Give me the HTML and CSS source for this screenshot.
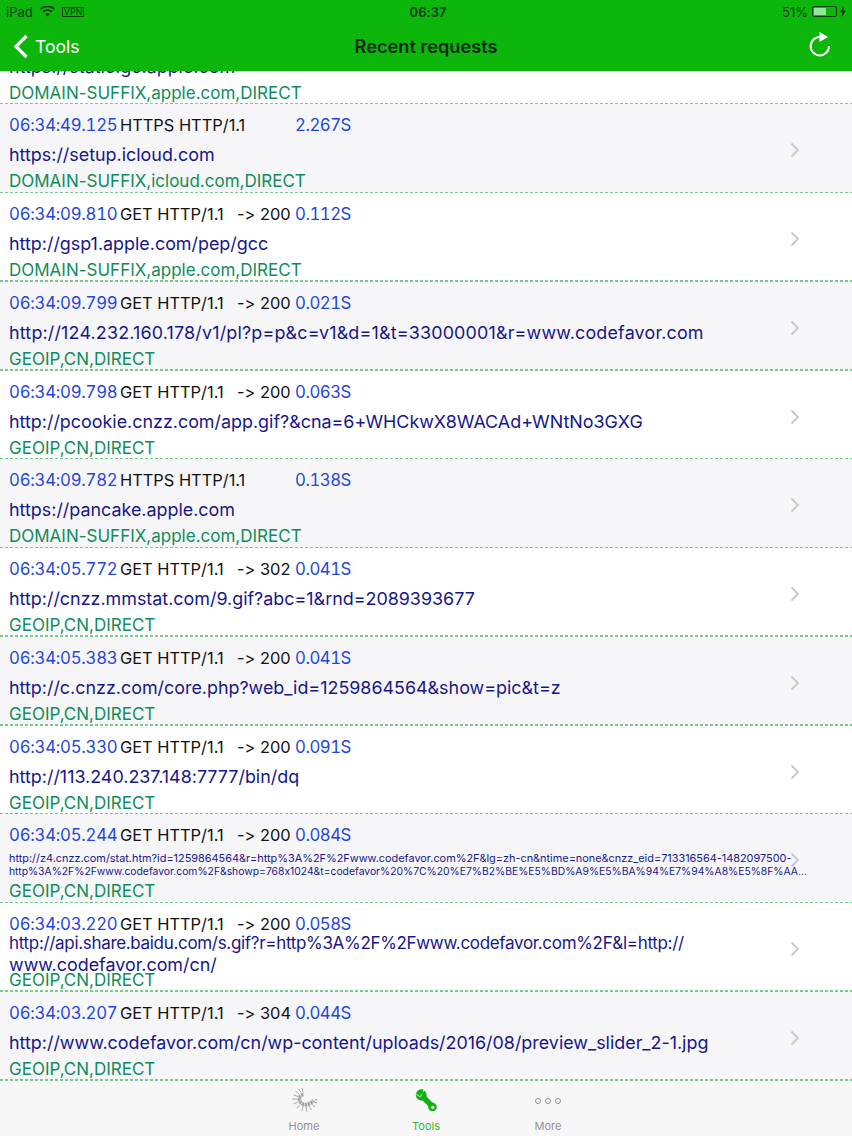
FILE: index.html
```html
<!DOCTYPE html>
<html lang="en">
<head>
<meta charset="utf-8">
<title>Recent requests</title>
<link rel="stylesheet" href="styles.css">
</head>
<body>
<div class="app">
  <header class="top">
    <div class="status">
      <div class="status-side">
        <span>iPad</span>
        <svg class="wifi" width="15" height="11" viewBox="0 0 15 11"><path d="M7.500 10.600 5.300 8.100a3.200 3.200 0 0 1 4.400 0zM3.800 6.500 2.600 5.100a7.400 7.400 0 0 1 9.800 0l-1.200 1.400a5.600 5.600 0 0 0-7.400 0zM1.300 3.700 0 2.300a11.200 11.200 0 0 1 15 0l-1.300 1.400a9.300 9.300 0 0 0-12.400 0z" fill="#0a3d0a"/></svg>
        <span class="vpn">VPN</span>
      </div>
      <div class="clock">06:37</div>
      <div class="status-side status-right">
        <span>51%</span>
        <span class="battery"><span class="battery-fill"></span></span>
        <svg width="6" height="11" viewBox="0 0 6 11"><path d="M3.600 0 0 6.200h2.400L1.800 11 6 4.400H3.400z" fill="#0a3d0a"/></svg>
      </div>
    </div>
    <nav class="nav">
      <div class="back">
        <svg width="16" height="25" viewBox="0 0 16 25"><path d="M13.500 2 3 12.500 13.500 23" fill="none" stroke="#fff" stroke-width="3.200"/></svg>
        <span>Tools</span>
      </div>
      <h1 class="title">Recent requests</h1>
      <svg class="refresh" width="24" height="26" viewBox="0 0 24 26"><path d="M13.500 5.200A9.200 9.200 0 1 0 21 14" fill="none" stroke="#fff" stroke-width="2"/><path d="M11.500 0 20 5 11.500 10z" fill="#fff"/></svg>
    </nav>
  </header>

  <main class="list">
    <article class="row row-first">
      <div class="meta"><span class="time"></span></div>
      <div class="url"><span>https://static.gc.apple.com</span></div>
      <div class="rule">DOMAIN-SUFFIX,apple.com,DIRECT</div>
    </article>
    <article class="row row-alt">
      <div class="meta"><span class="time">06:34:49.125</span><span class="method">HTTPS HTTP/1.1</span><span class="code"></span><span class="dur">2.267S</span></div>
      <div class="url"><span>https://setup.icloud.com</span></div>
      <div class="rule">DOMAIN-SUFFIX,icloud.com,DIRECT</div>
      <svg class="chev" width="10" height="16" viewBox="0 0 10 16"><path d="M1.500 1.500 8 8l-6.500 6.500" fill="none" stroke="#c7c7cc" stroke-width="1.800"/></svg>
    </article>
    <article class="row">
      <div class="meta"><span class="time">06:34:09.810</span><span class="method">GET HTTP/1.1</span><span class="code">-&gt; 200</span><span class="dur">0.112S</span></div>
      <div class="url"><span>http://gsp1.apple.com/pep/gcc</span></div>
      <div class="rule">DOMAIN-SUFFIX,apple.com,DIRECT</div>
      <svg class="chev" width="10" height="16" viewBox="0 0 10 16"><path d="M1.500 1.500 8 8l-6.500 6.500" fill="none" stroke="#c7c7cc" stroke-width="1.800"/></svg>
    </article>
    <article class="row row-alt">
      <div class="meta"><span class="time">06:34:09.799</span><span class="method">GET HTTP/1.1</span><span class="code">-&gt; 200</span><span class="dur">0.021S</span></div>
      <div class="url"><span class="url-loose">http://124.232.160.178/v1/pl?p=p&amp;c=v1&amp;d=1&amp;t=33000001&amp;r=www.codefavor.com</span></div>
      <div class="rule">GEOIP,CN,DIRECT</div>
      <svg class="chev" width="10" height="16" viewBox="0 0 10 16"><path d="M1.500 1.500 8 8l-6.500 6.500" fill="none" stroke="#c7c7cc" stroke-width="1.800"/></svg>
    </article>
    <article class="row">
      <div class="meta"><span class="time">06:34:09.798</span><span class="method">GET HTTP/1.1</span><span class="code">-&gt; 200</span><span class="dur">0.063S</span></div>
      <div class="url"><span>http://pcookie.cnzz.com/app.gif?&amp;cna=6+WHCkwX8WACAd+WNtNo3GXG</span></div>
      <div class="rule">GEOIP,CN,DIRECT</div>
      <svg class="chev" width="10" height="16" viewBox="0 0 10 16"><path d="M1.500 1.500 8 8l-6.500 6.500" fill="none" stroke="#c7c7cc" stroke-width="1.800"/></svg>
    </article>
    <article class="row row-alt">
      <div class="meta"><span class="time">06:34:09.782</span><span class="method">HTTPS HTTP/1.1</span><span class="code"></span><span class="dur">0.138S</span></div>
      <div class="url"><span>https://pancake.apple.com</span></div>
      <div class="rule">DOMAIN-SUFFIX,apple.com,DIRECT</div>
      <svg class="chev" width="10" height="16" viewBox="0 0 10 16"><path d="M1.500 1.500 8 8l-6.500 6.500" fill="none" stroke="#c7c7cc" stroke-width="1.800"/></svg>
    </article>
    <article class="row">
      <div class="meta"><span class="time">06:34:05.772</span><span class="method">GET HTTP/1.1</span><span class="code">-&gt; 302</span><span class="dur">0.041S</span></div>
      <div class="url"><span>http://cnzz.mmstat.com/9.gif?abc=1&amp;rnd=2089393677</span></div>
      <div class="rule">GEOIP,CN,DIRECT</div>
      <svg class="chev" width="10" height="16" viewBox="0 0 10 16"><path d="M1.500 1.500 8 8l-6.500 6.500" fill="none" stroke="#c7c7cc" stroke-width="1.800"/></svg>
    </article>
    <article class="row row-alt">
      <div class="meta"><span class="time">06:34:05.383</span><span class="method">GET HTTP/1.1</span><span class="code">-&gt; 200</span><span class="dur">0.041S</span></div>
      <div class="url"><span>http://c.cnzz.com/core.php?web_id=1259864564&amp;show=pic&amp;t=z</span></div>
      <div class="rule">GEOIP,CN,DIRECT</div>
      <svg class="chev" width="10" height="16" viewBox="0 0 10 16"><path d="M1.500 1.500 8 8l-6.500 6.500" fill="none" stroke="#c7c7cc" stroke-width="1.800"/></svg>
    </article>
    <article class="row">
      <div class="meta"><span class="time">06:34:05.330</span><span class="method">GET HTTP/1.1</span><span class="code">-&gt; 200</span><span class="dur">0.091S</span></div>
      <div class="url"><span>http://113.240.237.148:7777/bin/dq</span></div>
      <div class="rule">GEOIP,CN,DIRECT</div>
      <svg class="chev" width="10" height="16" viewBox="0 0 10 16"><path d="M1.500 1.500 8 8l-6.500 6.500" fill="none" stroke="#c7c7cc" stroke-width="1.800"/></svg>
    </article>
    <article class="row row-alt">
      <div class="meta"><span class="time">06:34:05.244</span><span class="method">GET HTTP/1.1</span><span class="code">-&gt; 200</span><span class="dur">0.084S</span></div>
      <div class="url url-small"><div><div class="small-a">http://z4.cnzz.com/stat.htm?id=1259864564&amp;r=http%3A%2F%2Fwww.codefavor.com%2F&amp;lg=zh-cn&amp;ntime=none&amp;cnzz_eid=713316564-1482097500-</div><div class="small-b">http%3A%2F%2Fwww.codefavor.com%2F&amp;showp=768x1024&amp;t=codefavor%20%7C%20%E7%B2%BE%E5%BD%A9%E5%BA%94%E7%94%A8%E5%8F%AA...</div></div></div>
      <div class="rule">GEOIP,CN,DIRECT</div>
      <svg class="chev" width="10" height="16" viewBox="0 0 10 16"><path d="M1.500 1.500 8 8l-6.500 6.500" fill="none" stroke="#c7c7cc" stroke-width="1.800"/></svg>
    </article>
    <article class="row">
      <div class="meta"><span class="time">06:34:03.220</span><span class="method">GET HTTP/1.1</span><span class="code">-&gt; 200</span><span class="dur">0.058S</span></div>
      <div class="url"><div><div class="pct">http://api.share.baidu.com/s.gif?r=http%3A%2F%2Fwww.codefavor.com%2F&amp;l=http://</div><div>www.codefavor.com/cn/</div></div></div>
      <div class="rule">GEOIP,CN,DIRECT</div>
      <svg class="chev" width="10" height="16" viewBox="0 0 10 16"><path d="M1.500 1.500 8 8l-6.500 6.500" fill="none" stroke="#c7c7cc" stroke-width="1.800"/></svg>
    </article>
    <article class="row row-alt">
      <div class="meta"><span class="time">06:34:03.207</span><span class="method">GET HTTP/1.1</span><span class="code">-&gt; 304</span><span class="dur">0.044S</span></div>
      <div class="url"><span>http://www.codefavor.com/cn/wp-content/uploads/2016/08/preview_slider_2-1.jpg</span></div>
      <div class="rule">GEOIP,CN,DIRECT</div>
      <svg class="chev" width="10" height="16" viewBox="0 0 10 16"><path d="M1.500 1.500 8 8l-6.500 6.500" fill="none" stroke="#c7c7cc" stroke-width="1.800"/></svg>
    </article>
  </main>

  <footer class="tabs">
    <div class="tab">
      <svg width="28" height="26" viewBox="0 0 28 26"><path d="M13 4 12 0M11 4.500 8.500 1M9 6 5.500 3M8 8.500 3.500 7M7.500 11 2 11M8 14 3.500 16M10 16.500 7 20.500M13 18 12 23M16 18.500 17 23.500M19 18 21.500 22M21.500 16 25 19M23.500 14 27 15M24.500 12 27 11.500" fill="none" stroke="#a8a8a8" stroke-width="1"/><path d="M13.500 6.500C10 7 8.800 10 9.500 12.500C10.500 16 15 17.500 18.500 16C20.500 15.200 22 14 23.500 12.500" fill="none" stroke="#a2a2a2" stroke-width="3.600" stroke-dasharray="2.400 .6"/></svg>
      <span>Home</span>
    </div>
    <div class="tab tab-on">
      <svg width="22" height="26" viewBox="0 0 22 24"><path d="M8.300.6C5.200-.4 1.800 1.300 1 4.500L5 7.200 8 3.700ZM.9 5.300C.5 8.400 2.800 11.300 6 11.600 8.400 11.800 10.800 10.300 11.500 8 12.100 5.700 11.300 3 9.300 1.400L5.400 8.300Z" fill="#12b012"/><path d="M8 8 17 17" stroke="#12b012" stroke-width="5.500"/><circle cx="17.500" cy="18" r="4.300" fill="#12b012"/><circle cx="17.800" cy="18.300" r="1.600" fill="#f7f7f8"/></svg>
      <span>Tools</span>
    </div>
    <div class="tab">
      <svg width="28" height="26" viewBox="0 0 28 26"><g fill="none" stroke="#8e8e93" stroke-width="1"><circle cx="4" cy="13" r="2.500"/><circle cx="14" cy="13" r="2.500"/><circle cx="24" cy="13" r="2.500"/></g></svg>
      <span>More</span>
    </div>
  </footer>
</div>
</body>
</html>
```

FILE: styles.css
```css
* { box-sizing: border-box; }
html, body { margin: 0; padding: 0; }
body {
  width: 852px;
  height: 1136px;
  overflow: hidden;
  background: #fff;
  font-family: Inter, "Liberation Sans", sans-serif;
  font-feature-settings: "calt" 0, "liga" 0;
}
.app { display: flex; flex-direction: column; height: 1136px; }

.top { flex: none; height: 71px; background: #0db60b; position: relative; z-index: 1; }
.status {
  height: 23px;
  display: grid;
  grid-template-columns: 1fr auto 1fr;
  align-items: center;
  padding: 0 6px;
  font-size: 13px;
  color: #0a3d0a;
}
.status-side { display: flex; align-items: center; gap: 7px; }
.status-right { justify-content: flex-end; gap: 3px; }
.clock { font-weight: 600; font-size: 13px; padding-left: 4px; }
.vpn {
  font-size: 9px;
  line-height: 8px;
  border: 1px solid #0a3d0a;
  padding: 0 1px;
}
.battery {
  width: 25px;
  height: 11px;
  border: 1px solid #0a3d0a;
  border-radius: 2px;
  padding: 1px;
  display: flex;
  margin-left: 1px;
}
.battery-fill { width: 12px; background: #8fe89a; }
.nav {
  height: 47px;
  display: grid;
  grid-template-columns: 1fr auto 1fr;
  align-items: center;
  padding: 0 13px 1px;
  color: #fff;
}
.back { display: flex; align-items: center; gap: 6px; font-size: 17.600px; }
.title { margin: 0; font-size: 18.200px; font-weight: 600; color: #062a06; }
.refresh { justify-self: end; margin: 0 7px 2px 0; }

.list { flex: 1; min-height: 0; overflow: hidden; }
.row {
  height: 88.750px;
  padding: 11px 0 0 9px;
  display: flex;
  flex-direction: column;
  position: relative;
  background-color: #fff;
  background-image: linear-gradient(to right, rgba(80, 185, 100, 0.75) 3px, transparent 3px);
  background-size: 5px 1.500px;
  background-repeat: repeat-x;
  background-position: left bottom;
}
.row-first { margin-top: -55.500px; }
.row-alt { background-color: #f6f6f8; }
.meta { flex: none; height: 20px; display: flex; align-items: center; font-size: 16.400px; color: #111; white-space: nowrap; }
.time {
  width: 111px;
  font-size: 16.800px;
  letter-spacing: -0.250px;
  font-feature-settings: "calt" 0, "liga" 0, "tnum" 1;
  color: #2446d8;
}
.method { width: 117px; }
.code { width: 58px; }
.dur {
  font-size: 16.800px;
  letter-spacing: -0.500px;
  font-feature-settings: "calt" 0, "liga" 0, "tnum" 1;
  color: #2446d8;
}
.url {
  flex: none;
  height: 38px;
  padding-top: 1px;
  margin-bottom: -1px;
  display: flex;
  align-items: center;
  font-size: 17.900px;
  line-height: 21px;
  color: #17178a;
  white-space: nowrap;
}
.url-loose { letter-spacing: 0.180px; }
.pct { font-size: 17px; letter-spacing: -0.320px; }
.url-small { line-height: 13px; }
.small-a { font-size: 10.900px; }
.small-b { font-size: 10.350px; }
.rule { flex: none; height: 18px; line-height: 18px; font-size: 17px; color: #0f8d5a; white-space: nowrap; }
.chev { position: absolute; right: 52px; top: 38px; }

.tabs {
  flex: none;
  height: 55px;
  background: #f7f7f8;
  display: flex;
  justify-content: center;
  gap: 61px;
}
.tab {
  width: 61px;
  display: flex;
  flex-direction: column;
  align-items: center;
  padding-top: 7px;
  gap: 5px;
  font-size: 11px;
  color: #929297;
}
.tab-on { color: #2fbb2f; }
```
